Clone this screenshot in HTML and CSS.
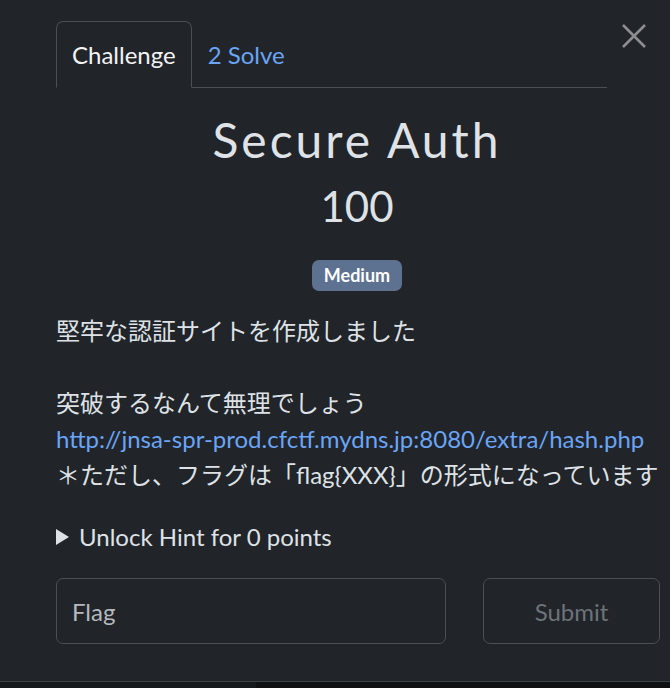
FILE: index.html
```html
<!DOCTYPE html>
<html lang="ja">
<head>
<meta charset="utf-8">
<link rel="stylesheet" href="styles.css">
</head>
<body>
<div class="modal">
  <div class="header">
    <ul class="tabs">
      <li class="tab active">Challenge</li>
      <li class="tab link">2 Solve</li>
    </ul>
    <button class="close" aria-label="Close">
      <svg width="26" height="26" viewBox="0 0 26 26"><path d="M2 2 L24 24 M24 2 L2 24" stroke="#8b8d90" stroke-width="2.6" fill="none"/></svg>
    </button>
  </div>
  <h2 class="name">Secure Auth</h2>
  <h3 class="value">100</h3>
  <div class="badge-row"><span class="badge">Medium</span></div>
  <div class="desc">
    <p>堅牢な認証サイトを作成しました</p>
    <p>突破するなんて無理でしょう<br><a class="url" href="#">http://jnsa-spr-prod.cfctf.mydns.jp:8080/extra/hash.php</a><br>＊ただし、フラグは「flag{XXX}」の形式になっています</p>
  </div>
  <div class="hint"><span class="tri"></span>Unlock Hint for 0 points</div>
  <div class="submit-row">
    <div class="input">Flag</div>
    <div class="btn">Submit</div>
  </div>
</div>
<div class="backdrop"><div class="bd-left"></div><div class="bd-right"></div></div>
</body>
</html>
```
FILE: styles.css
```css
html, body { margin: 0; padding: 0; }
body {
  background: #212429;
  font-family: Lato, "Noto Sans CJK JP", sans-serif;
  color: #dee2e6;
  width: 670px;
  height: 688px;
  overflow: hidden;
}
.modal {
  height: 682px;
  box-sizing: border-box;
  border-bottom: 1px solid #3e4348;
  padding-left: 56px;
}
.header {
  display: flex;
  align-items: flex-start;
  padding-top: 21px;
}
.tabs {
  list-style: none;
  margin: 0;
  padding: 0;
  display: flex;
  width: 551px;
  border-bottom: 1px solid #4a4f55;
}
.tab {
  font-size: 24px;
  padding: 0 15px;
  height: 65px;
  line-height: 65px;
  border: 1px solid transparent;
  margin-bottom: -1px;
}
.tab.active {
  color: #f1f3f5;
  border-color: #4a4f55;
  border-bottom-color: #212429;
  border-radius: 7px 7px 0 0;
}
.tab.link { color: #6aa5f7; }
.close {
  background: none;
  border: 0;
  padding: 0;
  margin: 2px 0 0 14px;
  width: 26px;
  height: 26px;
  display: flex;
}
.name {
  margin: 24px 0 0 0;
  text-align: center;
  font-weight: 400;
  font-size: 48px;
  letter-spacing: 3px;
  line-height: 56px;
  color: #dfe2e6;
  width: 602px;
}
.value {
  margin: 8px 0 0 0;
  text-align: center;
  font-weight: 400;
  font-size: 42px;
  line-height: 60px;
  width: 602px;
}
.badge-row {
  width: 602px;
  text-align: center;
  margin-top: 24px;
  line-height: 0;
}
.badge {
  display: inline-block;
  background: #5d7291;
  color: #fff;
  font-weight: 700;
  font-size: 18px;
  height: 31px;
  line-height: 31px;
  width: 90px;
  text-align: center;
  border-radius: 7px;
}
.desc {
  margin-top: 22px;
  font-size: 24px;
  line-height: 36px;
}
.desc p { margin: 0 0 36px 0; }
.desc p:last-child { margin-bottom: 0; }
.url { color: #6aa5f7; text-decoration: none; }
.hint {
  margin-top: 29px;
  font-size: 24px;
  line-height: 30px;
  display: flex;
  align-items: center;
}
.tri {
  width: 0; height: 0;
  border-left: 13px solid #dee2e6;
  border-top: 8px solid transparent;
  border-bottom: 8px solid transparent;
  margin-right: 10px;
}
.submit-row {
  display: flex;
  margin-top: 26px;
  gap: 37px;
}
.input, .btn {
  box-sizing: border-box;
  height: 66px;
  border: 1px solid #4a4f55;
  border-radius: 7px;
  font-size: 24px;
  display: flex;
  align-items: center;
}
.input {
  width: 390px;
  padding-left: 15px;
  color: #b4b9be;
}
.btn {
  width: 177px;
  justify-content: center;
  color: #6c737a;
}
.backdrop { display: flex; height: 6px; }
.bd-left { width: 256px; background: #171a1d; }
.bd-right { flex: 1; background: #0f1113; }
```
